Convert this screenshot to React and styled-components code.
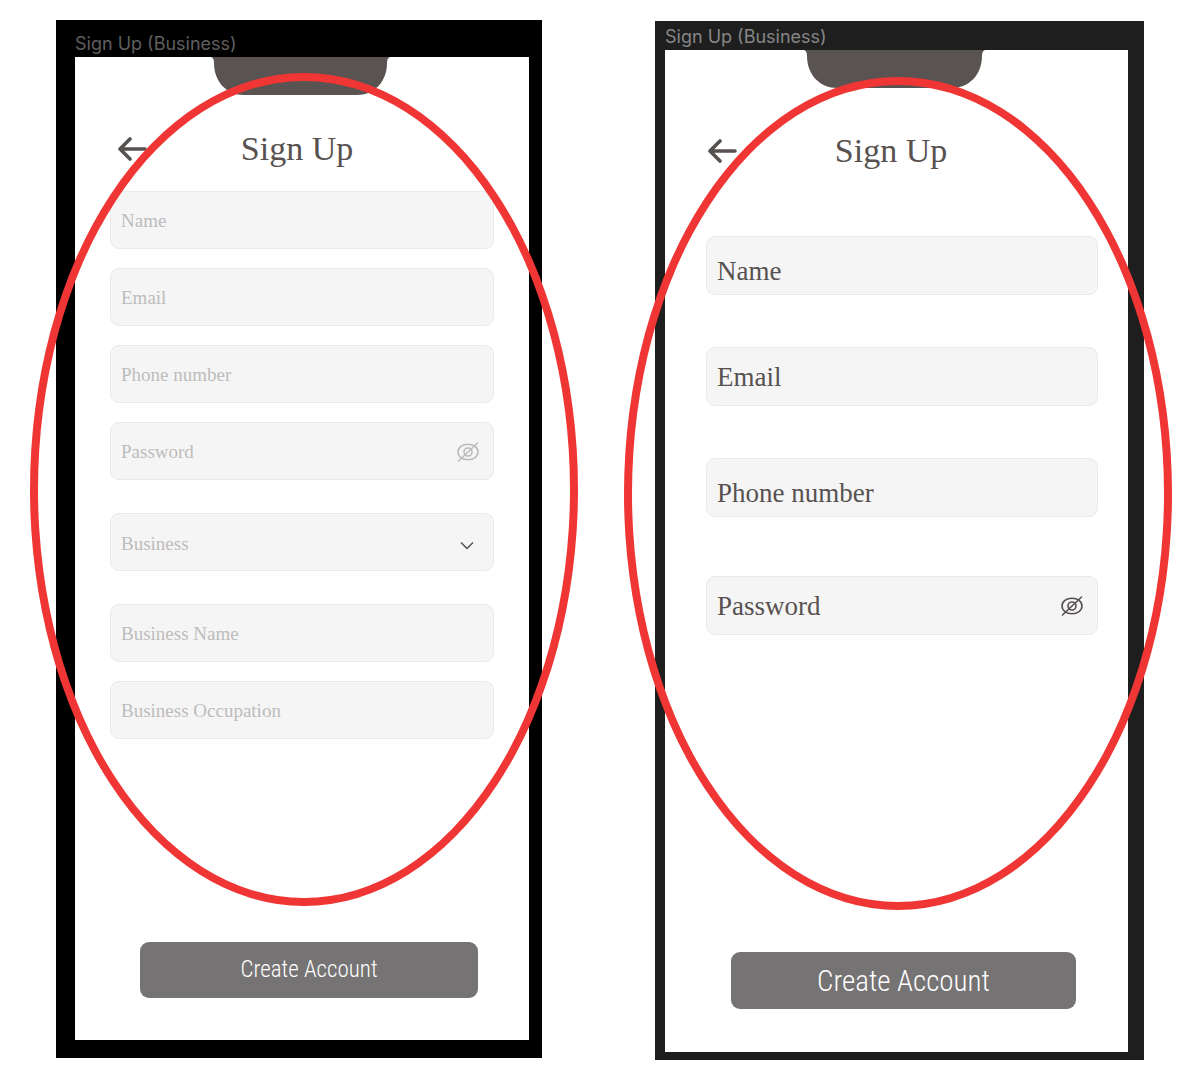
import React from "react";
import styled, { createGlobalStyle, ThemeProvider } from "styled-components";

const GlobalStyle = createGlobalStyle`
  * { box-sizing: border-box; }
  body { margin: 0; background: #fff; }
`;

const serif = '"Liberation Serif", "Times New Roman", serif';

const before = {
  frame: "#000",
  caption: "#5f5f5f",
  framePad: "0 13px 18px 19px",
  captionHeight: 37,
  captionPad: "11px 0 0",
  notchWidth: 179,
  notchShift: 3,
  headerPad: "34px 53px 0 43px",
  formPad: "22px 35px 0",
  fieldHeight: 58,
  fieldFont: 19,
  fieldColor: "#bdbcbc",
  textDrop: 2,
  gap: 19,
  groupGap: 33,
  actionPad: "203px 51px 42px 65px",
  buttonHeight: 56,
  buttonFont: 23,
  ring: "53px -36px 152px -26px",
};

const after = {
  frame: "#1e1e1e",
  caption: "#868686",
  framePad: "0 16px 8px 10px",
  captionHeight: 29,
  captionPad: "3px 0 0",
  notchWidth: 181,
  notchShift: 4,
  headerPad: "43px 54px 0 43px",
  formPad: "65px 30px 0 41px",
  fieldHeight: 59,
  fieldFont: 27,
  fieldColor: "#575150",
  textDrop: 0,
  gap: 52,
  groupGap: 59,
  actionPad: "317px 52px 43px 66px",
  buttonHeight: 57,
  buttonFont: 29,
  ring: "56px -28px 150px -31px",
};

const Board = styled.main`
  display: grid;
  grid-template-columns: 486fr 489fr;
  column-gap: 113px;
  align-items: start;
  padding: 20px 56px 0;
`;

const Frame = styled.section`
  position: relative;
  margin-top: ${(p) => p.$drop || 0}px;
  padding: ${(p) => p.theme.framePad};
  background: ${(p) => p.theme.frame};
`;

const Caption = styled.div`
  height: ${(p) => p.theme.captionHeight}px;
  padding: ${(p) => p.theme.captionPad};
  color: ${(p) => p.theme.caption};
  font: 400 18px/26px Inter, sans-serif;
  white-space: nowrap;
`;

const Screen = styled.div`
  display: flex;
  flex-direction: column;
  background: #fff;
`;

const NotchShape = styled.svg`
  display: block;
  align-self: center;
  width: ${(p) => p.theme.notchWidth}px;
  height: 38px;
  margin-right: ${(p) => p.theme.notchShift}px;
`;

const Header = styled.header`
  display: grid;
  grid-template-columns: 29px 1fr 29px;
  align-items: center;
  padding: ${(p) => p.theme.headerPad};
`;

const IconButton = styled.button`
  display: flex;
  flex: none;
  padding: 0;
  border: 0;
  background: none;
  color: #575150;
  cursor: pointer;
`;

const EyeButton = styled(IconButton)`
  color: ${(p) => p.theme.fieldColor};
`;

const Title = styled.h1`
  margin: 0;
  color: #575150;
  font: 400 34px/40px ${serif};
  text-align: center;
`;

const Form = styled.form`
  display: flex;
  flex-direction: column;
  gap: ${(p) => p.theme.groupGap}px;
  padding: ${(p) => p.theme.formPad};
`;

const Group = styled.div`
  display: flex;
  flex-direction: column;
  gap: ${(p) => p.theme.gap}px;
`;

const FieldBox = styled.div`
  display: flex;
  align-items: center;
  height: ${(p) => p.theme.fieldHeight}px;
  padding: ${(p) => (p.$low ? 11 : p.theme.textDrop)}px 14px 0 10px;
  border: 1px solid #e9e9e9;
  border-radius: 9px;
  background: #f5f5f5;
`;

const TextInput = styled.input`
  flex: 1;
  min-width: 0;
  padding: 0;
  border: 0;
  outline: 0;
  background: none;
  color: ${(p) => p.theme.fieldColor};
  font: 400 ${(p) => p.theme.fieldFont}px/32px ${serif};
  &::placeholder {
    color: inherit;
    opacity: 1;
  }
`;

const Picker = styled.select`
  flex: 1;
  min-width: 0;
  padding: 2px 0 0;
  border: 0;
  outline: 0;
  appearance: none;
  background: none;
  color: ${(p) => p.theme.fieldColor};
  font: 400 ${(p) => p.theme.fieldFont}px/32px ${serif};
`;

const Chevron = styled.svg`
  flex: none;
  margin: 4px 5px 0 0;
  pointer-events: none;
`;

const Actions = styled.div`
  display: flex;
  padding: ${(p) => p.theme.actionPad};
`;

const Submit = styled.button`
  flex: 1;
  height: ${(p) => p.theme.buttonHeight}px;
  padding: 0;
  border: 0;
  border-radius: 9px;
  background: #767374;
  color: #fff;
  font: 300 ${(p) => p.theme.buttonFont}px/36px "Roboto Condensed", Roboto, sans-serif;
  cursor: pointer;
`;

const Ring = styled.div`
  position: absolute;
  inset: ${(p) => p.theme.ring};
  border: 8px solid #f03634;
  border-radius: 50%;
  pointer-events: none;
`;

const Notch = () => (
  <NotchShape viewBox="0 0 179 38" preserveAspectRatio="none" aria-hidden="true">
    <path d="M0 0H179Q176 1 176 6C176 25 163 38 146 38H33C16 38 3 25 3 6Q3 1 0 0Z" fill="#595352" />
  </NotchShape>
);

const BackArrow = () => (
  <svg width="29" height="26" viewBox="0 0 29 26" fill="none" stroke="currentColor" strokeWidth="3.6" strokeLinecap="round" strokeLinejoin="round">
    <path d="M12 3 2 13l10 10M2 13h25" />
  </svg>
);

const EyeOff = () => (
  <svg width="22" height="20" viewBox="0 0 22 20" fill="none" stroke="currentColor" strokeWidth="1.6" strokeLinecap="round">
    <ellipse cx="11" cy="10" rx="10" ry="7.8" />
    <circle cx="11" cy="10" r="4" />
    <path d="M1.5 19 20.5 1" />
  </svg>
);

const Field = ({ name, type = "text", low, children }) => (
  <FieldBox $low={low}>
    <TextInput type={type} placeholder={name} aria-label={name} />
    {children}
  </FieldBox>
);

const Password = () => (
  <Field name="Password" type="password">
    <EyeButton type="button" aria-label="Show password">
      <EyeOff />
    </EyeButton>
  </Field>
);

const SignUp = ({ theme, drop, formId, children }) => (
  <ThemeProvider theme={theme}>
    <Frame $drop={drop}>
      <Caption>Sign Up (Business)</Caption>
      <Screen>
        <Notch />
        <Header>
          <IconButton type="button" aria-label="Back">
            <BackArrow />
          </IconButton>
          <Title>Sign Up</Title>
        </Header>
        <Form id={formId} onSubmit={(e) => e.preventDefault()}>
          {children}
        </Form>
        <Actions>
          <Submit type="submit" form={formId}>Create Account</Submit>
        </Actions>
      </Screen>
      <Ring />
    </Frame>
  </ThemeProvider>
);

export default function App() {
  return (
    <>
      <GlobalStyle />
      <Board>
        <SignUp theme={before} formId="business-form">
          <Group>
            <Field name="Name" />
            <Field name="Email" />
            <Field name="Phone number" />
            <Password />
          </Group>
          <FieldBox>
            <Picker aria-label="Account type" defaultValue="Business">
              <option>Business</option>
            </Picker>
            <Chevron width="14" height="9" viewBox="0 0 14 9" fill="none" stroke="#575150" strokeWidth="1.5">
              <path d="M1 1.5 7 7.5l6-6" />
            </Chevron>
          </FieldBox>
          <Group>
            <Field name="Business Name" />
            <Field name="Business Occupation" />
          </Group>
        </SignUp>
        <SignUp theme={after} drop={1} formId="simple-form">
          <Group>
            <Field name="Name" low />
            <Field name="Email" />
            <Field name="Phone number" low />
          </Group>
          <Password />
        </SignUp>
      </Board>
    </>
  );
}
